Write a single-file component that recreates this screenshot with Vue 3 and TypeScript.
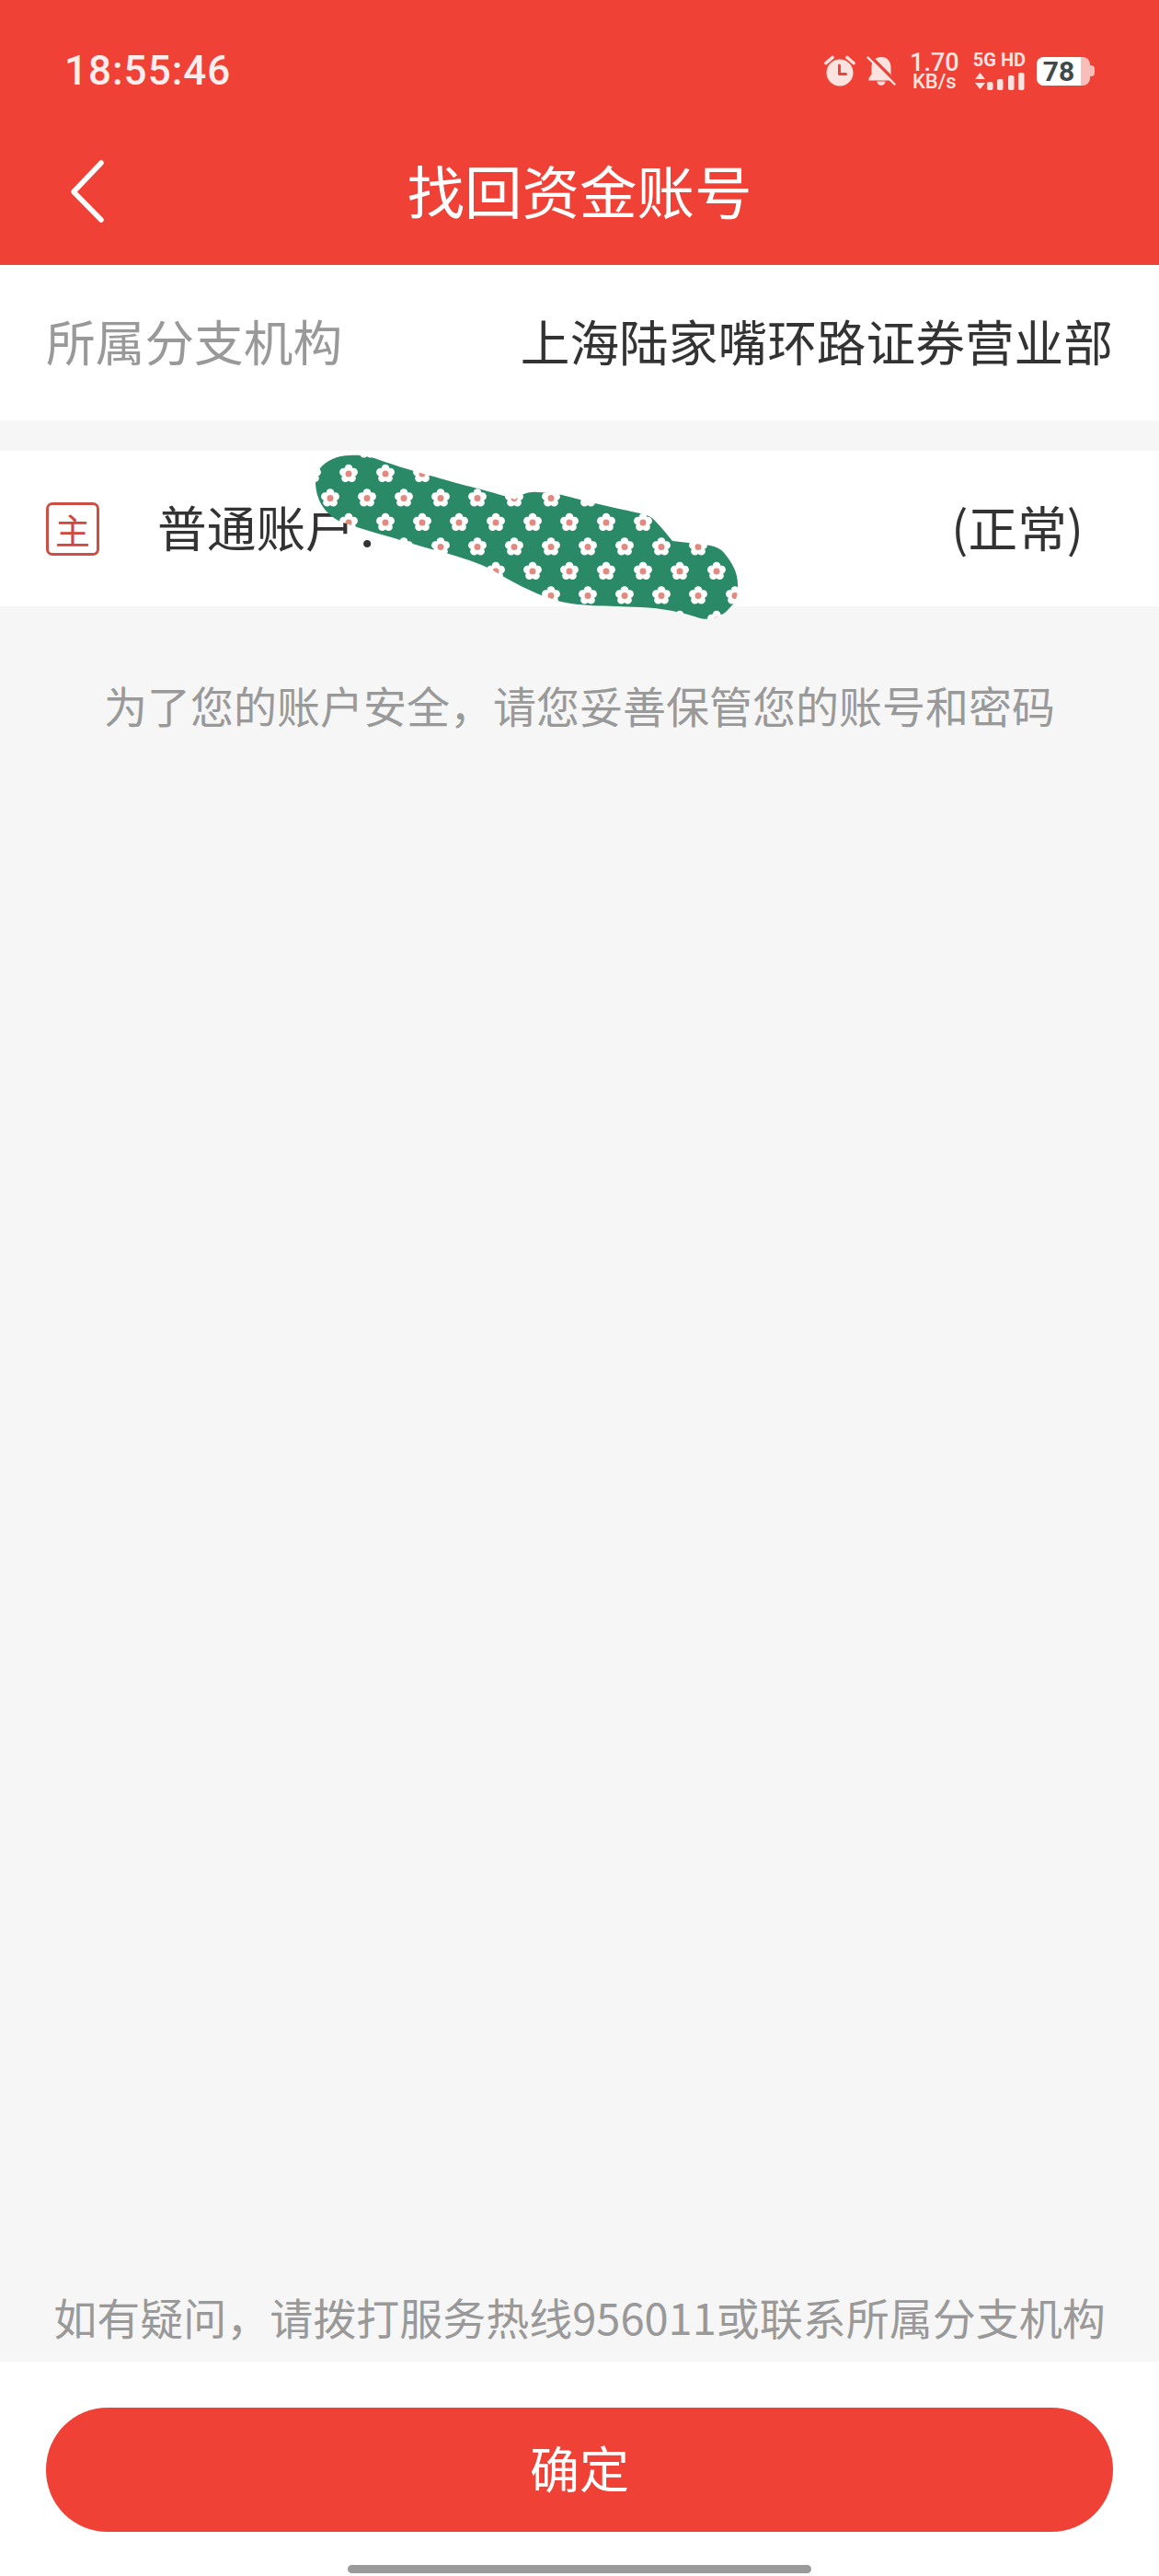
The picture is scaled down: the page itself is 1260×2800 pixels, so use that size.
<template>
  <div class="page">
    <header class="header">
      <div class="status">
        <span class="time">18:55:46</span>
        <div class="status-icons">
          <svg class="ic-alarm" width="34" height="34" viewBox="0 0 34 34">
            <circle cx="17" cy="19" r="14.5" fill="#fde3e0" />
            <path d="M2 8.5 9 2.5M32 8.5 25 2.5" stroke="#fde3e0" stroke-width="3.6" stroke-linecap="round" />
            <path d="M16.5 11v9.5h7" fill="none" stroke="#ef4136" stroke-width="3" stroke-linecap="round" stroke-linejoin="round" />
          </svg>
          <svg class="ic-bell" width="32" height="32" viewBox="0 0 32 32">
            <path d="M16 1C9.500 1 5.500 5.800 5.500 12v7.500L2.500 24v2.500h27V24l-3-4.500V12C26.500 5.800 22.500 1 16 1Z" fill="#fde3e0" />
            <path d="M11.500 27.500a4.500 4.200 0 0 0 9 0Z" fill="#fde3e0" />
            <path d="M4 0 32 28" stroke="#ef4136" stroke-width="3.500" />
            <path d="M1.500 1.500 30.500 30.500" stroke="#fde3e0" stroke-width="2.400" stroke-linecap="round" />
          </svg>
          <div class="speed">
            <span class="speed-num">1.70</span>
            <span class="speed-unit">KB/s</span>
          </div>
          <div class="net">
            <span class="net-label">5G HD</span>
            <svg width="56" height="20" viewBox="0 0 56 20">
              <path d="M7.500 1 13 8H2ZM7.500 19 2 12H13Z" fill="#fde3e0" />
              <rect
                v-for="bar in signalBars"
                :key="bar.x"
                :x="bar.x"
                :y="bar.y"
                width="6.500"
                :height="20 - bar.y"
                rx="2"
                fill="#fde3e0"
              />
            </svg>
          </div>
          <div class="battery">
            <div class="battery-body">
              <div class="battery-fill">78</div>
            </div>
            <div class="battery-nub"></div>
          </div>
        </div>
      </div>
      <div class="nav">
        <svg class="back" width="40" height="70" viewBox="0 0 40 70">
          <path d="M35 4 5 35.500 35 66" fill="none" stroke="#fff" stroke-width="5.500" stroke-linecap="round" stroke-linejoin="round" />
        </svg>
        <h1 class="title">找回资金账号</h1>
      </div>
    </header>

    <main class="content">
      <section class="row branch">
        <span class="branch-label">所属分支机构</span>
        <span class="branch-value">上海陆家嘴环路证券营业部</span>
      </section>

      <section class="row account">
        <span class="badge">主</span>
        <span class="account-name">普通账户：</span>
        <span class="account-state">(正常)</span>
      </section>

      <p class="notice">为了您的账户安全，请您妥善保管您的账号和密码</p>

      <p class="help">如有疑问，请拨打服务热线956011或联系所属分支机构</p>
    </main>

    <footer class="footer">
      <button class="confirm">确定</button>
      <div class="home-bar"></div>
    </footer>

    <!-- scribble that hides the account number -->
    <svg class="scribble" width="490" height="200" viewBox="330 485 490 200">
      <defs>
        <g id="flower">
          <circle v-for="p in petals" :key="p.x" :cx="p.x" :cy="p.y" r="4.400" fill="#fff" />
          <circle cx="0" cy="0" r="3.500" fill="#e08a80" />
        </g>
        <pattern id="flowers" width="40" height="53" patternUnits="userSpaceOnUse" patternTransform="translate(359 502)">
          <rect width="40" height="53" fill="#2a8a68" />
          <use href="#flower" x="20" y="13" />
          <use href="#flower" x="0" y="39.500" />
          <use href="#flower" x="40" y="39.500" />
        </pattern>
      </defs>
      <path
        fill="url(#flowers)"
        d="M380 495C392 494 400 496 407 498C440 510 465 516 482 521C510 529 540 536 560 543C566 537 576 534 584 535C592 535 602 536 611 538C640 546 665 551 691 557C702 559 708 561 712 566C720 574 726 582 731 588L766 592C776 593 784 596 788 602C796 612 802 622 802 635C803 648 799 656 793 661C786 670 772 675 761 672C740 665 720 661 696 660C660 658 625 660 600 651C578 644 556 632 536 620C510 606 470 598 445 590C420 582 395 576 370 567C352 558 343 542 343 523C343 506 362 495 380 495Z"
      />
    </svg>
  </div>
</template>

<script setup lang="ts">
interface Point {
  x: number;
  y: number;
}

const signalBars: Point[] = [
  {x: 15, y: 11},
  {x: 26, y: 8},
  {x: 38, y: 4},
  {x: 49, y: 1},
];

// five petals, the first one pointing straight up
const petals: Point[] = [0, 1, 2, 3, 4].map((i) => {
  const angle = (i * 2 * Math.PI) / 5 - Math.PI / 2;
  return {x: Math.cos(angle) * 5.8, y: Math.sin(angle) * 5.8};
});
</script>

<style>
html,
body {
  margin: 0;
  background: #f6f6f6;
}
</style>

<style scoped>
.page {
  position: relative;
  display: flex;
  flex-direction: column;
  width: 1260px;
  height: 2800px;
  overflow: hidden;
  background: #f6f6f6;
  font-family: "Noto Sans CJK SC", "Noto Sans", sans-serif;
}

.header {
  height: 288px;
  flex-shrink: 0;
  background: #ef4136;
  color: #fff;
}

.status {
  display: flex;
  align-items: center;
  justify-content: space-between;
  height: 154px;
  padding: 0 70px;
}

.time {
  font-family: Roboto, sans-serif;
  font-size: 44px;
  font-weight: 500;
  letter-spacing: 1px;
  color: #fdeeed;
}

.status-icons {
  display: flex;
  align-items: center;
  gap: 12px;
}

.speed {
  display: flex;
  flex-direction: column;
  align-items: center;
  width: 50px;
  margin: 0 5px;
  font-family: Roboto, sans-serif;
  font-weight: 500;
  color: #fde3e0;
}

.speed-num {
  font-size: 27px;
  line-height: 23px;
}

.speed-unit {
  font-size: 22px;
  line-height: 18px;
}

.net {
  display: flex;
  flex-direction: column;
  align-items: center;
  gap: 5px;
  color: #fde3e0;
}

.net-label {
  font-family: Roboto, sans-serif;
  font-size: 20px;
  font-weight: 700;
  line-height: 16px;
  white-space: nowrap;
}

.battery {
  display: flex;
  align-items: center;
}

.battery-body {
  width: 58px;
  height: 31px;
  border-radius: 8px;
  background: #f8bfba;
}

.battery-fill {
  width: 48px;
  height: 31px;
  border-radius: 8px 0 0 8px;
  background: #fff;
  color: #3f4a4c;
  font-family: Roboto, sans-serif;
  font-size: 30px;
  font-weight: 700;
  line-height: 31px;
  text-align: center;
}

.battery-nub {
  width: 5px;
  height: 12px;
  border-radius: 0 4px 4px 0;
  background: #f8bfba;
}

.nav {
  position: relative;
  display: flex;
  align-items: center;
  justify-content: center;
  height: 134px;
}

.back {
  position: absolute;
  left: 75px;
  top: 19px;
}

.title {
  margin: 0 0 30px;
  font-size: 62.500px;
  font-weight: 400;
  line-height: 80px;
}

.content {
  display: flex;
  flex: 1;
  flex-direction: column;
}

.row {
  display: flex;
  align-items: center;
  box-sizing: border-box;
  height: 169px;
  padding-bottom: 6px;
  background: #fff;
  font-size: 53.700px;
  color: #333;
}

.branch {
  justify-content: space-between;
  padding-left: 50px;
  padding-right: 50px;
  margin-bottom: 33px;
}

.branch-label {
  color: #999;
}

.account {
  padding-left: 50px;
  padding-right: 82px;
}

.badge {
  display: flex;
  align-items: center;
  justify-content: center;
  box-sizing: border-box;
  width: 58px;
  height: 58px;
  margin: 6px 63px 0 0;
  border: 3px solid #cc4f45;
  border-radius: 7px;
  font-size: 38px;
  color: #d4473c;
}

.account-state {
  margin-left: auto;
}

.notice,
.help {
  margin: 0;
  color: #999;
  font-size: 47px;
  line-height: 66px;
  text-align: center;
}

.notice {
  padding-top: 74px;
}

.help {
  margin-top: auto;
  padding-bottom: 16px;
}

.footer {
  display: flex;
  flex-direction: column;
  align-items: center;
  height: 233px;
  flex-shrink: 0;
  box-sizing: border-box;
  padding-top: 50px;
  background: #fff;
}

.confirm {
  width: 1160px;
  height: 135px;
  padding: 0 0 6px;
  border: none;
  border-radius: 67px;
  background: #ef4136;
  color: #fff;
  font-family: inherit;
  font-size: 54px;
}

.home-bar {
  width: 504px;
  height: 9px;
  margin-top: 36px;
  border-radius: 5px;
  background: #9a9a9a;
}

.scribble {
  position: absolute;
  left: 330px;
  top: 485px;
}
</style>
